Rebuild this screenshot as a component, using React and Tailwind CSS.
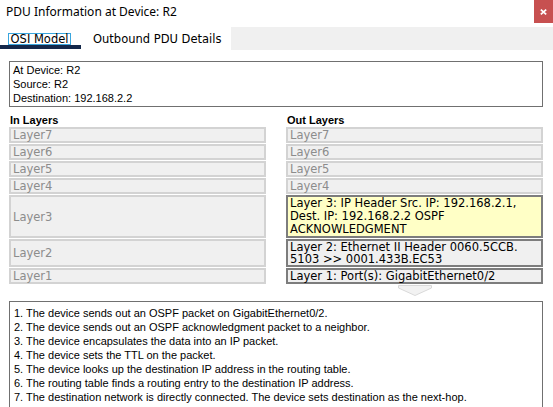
import React from "react";

const dis = "border-2 border-[#d3d3d3] bg-[#f0f0f0] text-[#8c8c8c] px-[2px] flex items-center";
const act = "border-2 border-[#7d7d7d] text-black px-[2px]";

function InRows() {
  return (
    <div className="flex flex-col gap-[1px] text-[11.5px] leading-[12px]" style={{ fontFamily: '"DejaVu Sans", sans-serif' }}>
      <div className={`${dis} h-[16px]`}>Layer7</div>
      <div className={`${dis} h-[16px]`}>Layer6</div>
      <div className={`${dis} h-[16px]`}>Layer5</div>
      <div className={`${dis} h-[16px]`}>Layer4</div>
      <div className={`${dis} h-[43px]`}>Layer3</div>
      <div className={`${dis} h-[28px]`}>Layer2</div>
      <div className={`${dis} h-[16px]`}>Layer1</div>
    </div>
  );
}

function OutRows() {
  return (
    <div className="flex flex-col gap-[1px] text-[11.5px] leading-[12px]" style={{ fontFamily: '"DejaVu Sans", sans-serif' }}>
      <div className={`${dis} h-[16px]`}>Layer7</div>
      <div className={`${dis} h-[16px]`}>Layer6</div>
      <div className={`${dis} h-[16px]`}>Layer5</div>
      <div className={`${dis} h-[16px]`}>Layer4</div>
      <div className={`${act} h-[43px] bg-[#ffffc6] leading-[13px]`}>
        Layer 3: IP Header Src. IP: 192.168.2.1,<br />Dest. IP: 192.168.2.2 OSPF<br />ACKNOWLEDGMENT
      </div>
      <div className={`${act} h-[28px] bg-[#f0f0f0] leading-[12px] flex flex-col justify-center`}>
        <span>Layer 2: Ethernet II Header 0060.5CCB.</span>
        <span>5103 &gt;&gt; 0001.433B.EC53</span>
      </div>
      <div className={`${act} h-[16px] bg-[#f0f0f0] flex items-center`}>Layer 1: Port(s): GigabitEthernet0/2</div>
    </div>
  );
}

export default function App() {
  const arial = { fontFamily: '"Liberation Sans", Arial, sans-serif' };
  return (
    <div className="w-[553px] h-[407px] bg-white overflow-hidden flex flex-col">
      {/* title bar */}
      <div className="h-[23px] flex items-center justify-between">
        <span className="pl-[6px] text-[12px] text-black" style={{ fontFamily: '"Noto Sans", sans-serif' }}>
          PDU Information at Device: R2
        </span>
        <div className="w-[19px] h-[23px] bg-[#c75050] flex items-center justify-center">
          <svg width="7" height="6" viewBox="0 0 7 6">
            <path d="M0.8 0.6 L6.2 5.4 M6.2 0.6 L0.8 5.4" stroke="white" strokeWidth="1.7" />
          </svg>
        </div>
      </div>
      {/* tabs */}
      <div className="mt-[4px] h-[23px] flex text-[11.5px] text-black" style={{ fontFamily: '"DejaVu Sans", sans-serif' }}>
        <div className="w-[81px] flex flex-col">
          <div className="mt-[6px] ml-[8px] w-[63px] h-[12px] border border-[#3aa6de] flex items-center justify-center leading-[12px]">
            OSI Model
          </div>
          <div className="h-[4px] bg-[#14284a]" />
        </div>
        <div className="w-[150px] pl-[12px] pt-[6px] leading-[12px]">Outbound PDU Details</div>
        <div className="flex-1 bg-[#f0f0f0]" />
      </div>
      {/* info box */}
      <div className="mt-[11px] ml-[9px] w-[534px] h-[46px] border border-[#707070] pl-[3px] pt-[1px] text-[11px] leading-[14px] text-black" style={arial}>
        <div>At Device: R2</div>
        <div>Source: R2</div>
        <div>Destination: 192.168.2.2</div>
      </div>
      {/* layers */}
      <div className="ml-[9px] w-[534px] flex gap-[20px]">
        <div className="flex-1 flex flex-col">
          <div className="mt-[6px] pl-[1px] text-[11px] leading-[14px] font-bold text-black" style={arial}>In Layers</div>
          <InRows />
        </div>
        <div className="flex-1 flex flex-col">
          <div className="mt-[6px] pl-[1px] text-[11px] leading-[14px] font-bold text-black" style={arial}>Out Layers</div>
          <OutRows />
          <div className="flex justify-center mt-[1px]">
            <svg width="34" height="11" viewBox="0 0 34 11">
              <polygon points="0.5,0.5 33.5,0.5 33.5,3 17,10.5 0.5,3" fill="#f2f2f2" stroke="#d9d9d9" strokeWidth="1" />
            </svg>
          </div>
        </div>
      </div>
      {/* description */}
      <div className="mt-[5px] ml-[9px] w-[534px] flex-1 border-l border-t border-r border-[#707070] pl-[4px] pt-[4px] text-[11px] leading-[14px] text-black" style={arial}>
        <div>1. The device sends out an OSPF packet on GigabitEthernet0/2.</div>
        <div>2. The device sends out an OSPF acknowledgment packet to a neighbor.</div>
        <div>3. The device encapsulates the data into an IP packet.</div>
        <div>4. The device sets the TTL on the packet.</div>
        <div>5. The device looks up the destination IP address in the routing table.</div>
        <div>6. The routing table finds a routing entry to the destination IP address.</div>
        <div>7. The destination network is directly connected. The device sets destination as the next-hop.</div>
      </div>
    </div>
  );
}
